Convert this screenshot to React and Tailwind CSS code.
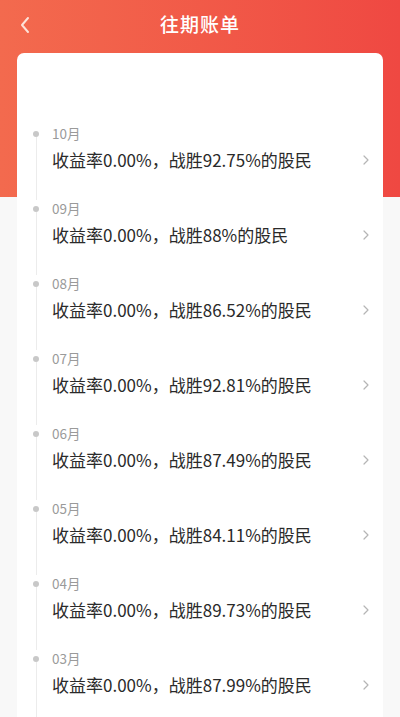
import React from "react";

const items = [
  ["10月", "92.75%"],
  ["09月", "88%"],
  ["08月", "86.52%"],
  ["07月", "92.81%"],
  ["06月", "87.49%"],
  ["05月", "84.11%"],
  ["04月", "89.73%"],
  ["03月", "87.99%"],
];

export default function App() {
  return (
    <div
      className="w-[400px] h-[717px] overflow-hidden bg-[#f8f8f8]"
      style={{ fontFamily: '"Noto Sans CJK SC", "Noto Sans", sans-serif' }}
    >
      <div className="h-[197px] bg-gradient-to-r from-[#f36a4e] to-[#ef4842] flex items-start">
        <div className="w-full h-[49px] flex items-center px-[19px]">
          <svg width="12" height="18" viewBox="0 0 12 18">
            <path d="M9 2 L3 9 L9 16" fill="none" stroke="#fde2d8" strokeWidth="2" strokeLinecap="round" strokeLinejoin="round" />
          </svg>
          <div className="flex-1 text-center text-white text-[19px] font-medium tracking-[1px] pr-[12px]">往期账单</div>
        </div>
      </div>
      <div className="mx-[17px] -mt-[144px] bg-white rounded-t-[7px] h-[700px] pt-[72px] pl-[15px] pr-[13px]">
        {items.map(([m, p]) => (
          <div key={m} className="flex h-[75px]">
            <div className="w-[8px] flex flex-col items-center pt-[6px]">
              <div className="w-[6px] h-[6px] rounded-full bg-[#c8c8c8] shrink-0" />
              <div className="w-px flex-1 bg-[#ececec]" />
            </div>
            <div className="flex-1 pl-[12px]">
              <div className="text-[13.5px] leading-[16px] text-[#9a9a9a]">{m}</div>
              <div className="flex items-center justify-between mt-[8px]">
                <div className="text-[17px] leading-[22px] text-[#2a2a2a]">
                  收益率0.00%，战胜{p}的股民
                </div>
                <svg width="8" height="12" viewBox="0 0 8 12">
                  <path d="M2 2 L6 6 L2 10" fill="none" stroke="#b5b5b5" strokeWidth="1.2" strokeLinecap="round" strokeLinejoin="round" />
                </svg>
              </div>
            </div>
          </div>
        ))}
      </div>
    </div>
  );
}
